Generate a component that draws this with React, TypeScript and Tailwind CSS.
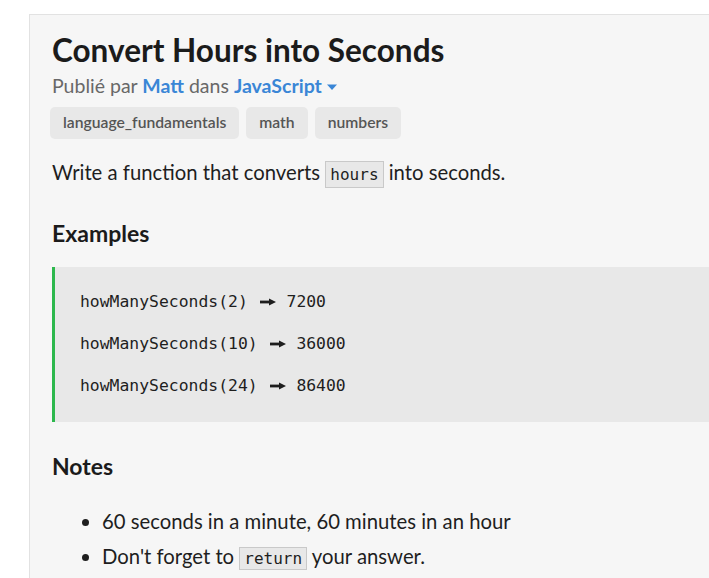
import React from "react";

const lato = { fontFamily: "Lato, 'Open Sans', sans-serif" };
const mono = { fontFamily: "'DejaVu Sans Mono', monospace" };

function Arrow() {
  return (
    <span className="inline-block w-[19px] align-middle">
      <svg width="19" height="10" viewBox="0 0 19 10" className="block">
        <path d="M2 3.6 L12 3.6 L12 6.4 L2 6.4 Z" fill="#1e1e1e" />
        <path d="M11 1.5 L18 5 L11 8.5 Z" fill="#1e1e1e" />
      </svg>
    </span>
  );
}

function Line({ call, result }: { call: string; result: string }) {
  return (
    <div className="flex items-center whitespace-pre">
      <span>{call} </span>
      <Arrow />
      <span> {result}</span>
    </div>
  );
}

export default function App() {
  return (
    <div className="min-h-[578px] w-[709px] overflow-hidden bg-white pl-[29px] pt-[14px]" style={lato}>
      <div className="min-h-[564px] border-l border-t border-[#e2e2e2] bg-[#f6f6f6] pl-[22px] pt-[16px]">
        <h1 className="text-[31.5px] font-bold leading-[38px] text-[#1b1b1b]">Convert Hours into Seconds</h1>
        <div className="mt-[4px] flex items-center text-[19.5px] leading-[26px] text-[#686868]">
          <span>Publié par&nbsp;</span>
          <span className="font-bold text-[#3a86d6]">Matt</span>
          <span>&nbsp;dans&nbsp;</span>
          <span className="font-bold text-[#3a86d6]">JavaScript</span>
          <svg width="12" height="8" viewBox="0 0 12 8" className="ml-[4px] mt-[2px]">
            <path d="M1 1.5 L11 1.5 L6 7 Z" fill="#3a86d6" />
          </svg>
        </div>
        <div className="-ml-[2px] mt-[8px] flex gap-[7px]">
          {["language_fundamentals", "math", "numbers"].map((t) => (
            <span
              key={t}
              className="flex h-[32px] items-center rounded-[5px] bg-[#e8e8e8] px-[13px] text-[15.7px] font-semibold text-[#555555]"
            >
              {t}
            </span>
          ))}
        </div>
        <p className="mt-[17px] text-[20.3px] leading-[32px] text-[#1e1e1e]">
          Write a function that converts{" "}
          <code
            className="inline-block border border-[#c9c9c9] bg-[#e8e8e8] px-[4px] text-[16px] leading-[25px] text-[#1e1e1e]"
            style={mono}
          >
            hours
          </code>{" "}
          into seconds.
        </p>
        <h2 className="mt-[30px] text-[23px] font-bold leading-[30px] text-[#1b1b1b]">Examples</h2>
        <div
          className="mt-[19px] flex flex-col gap-[18px] border-l-[3px] border-[#2db84d] bg-[#e8e8e8] pb-[24px] pl-[25px] pt-[23px] text-[16.4px] leading-[24px] text-[#1e1e1e]"
          style={mono}
        >
          <Line call="howManySeconds(2)" result="7200" />
          <Line call="howManySeconds(10)" result="36000" />
          <Line call="howManySeconds(24)" result="86400" />
        </div>
        <h2 className="mt-[29px] text-[23px] font-bold leading-[30px] text-[#1b1b1b]">Notes</h2>
        <ul className="mt-[26px] list-disc pl-[50px] text-[20.3px] leading-[28px] text-[#1e1e1e]">
          <li className="mb-[7px]">60 seconds in a minute, 60 minutes in an hour</li>
          <li>
            Don't forget to{" "}
            <code
              className="inline-block border border-[#c9c9c9] bg-[#e8e8e8] px-[4px] text-[16px] leading-[21px] text-[#1e1e1e]"
              style={mono}
            >
              return
            </code>{" "}
            your answer.
          </li>
        </ul>
      </div>
    </div>
  );
}
